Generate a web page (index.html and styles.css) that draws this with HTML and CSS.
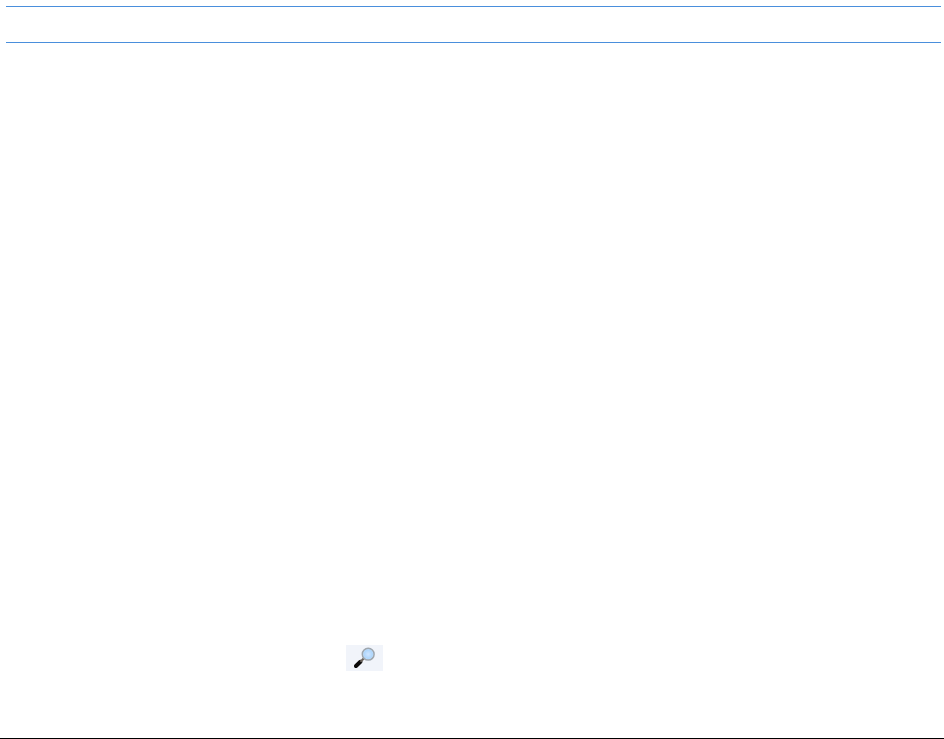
FILE: index.html
```html
<!DOCTYPE html>
<html lang="en">
<head>
<meta charset="utf-8">
<title>Search</title>
<link rel="stylesheet" href="styles.css">
</head>
<body>
<div class="page">
  <header class="header"></header>
  <main class="content">
    <button class="search" type="button" aria-label="Search">
      <svg class="search-icon" width="24" height="22" viewBox="0 0 24 22">
        <defs>
          <radialGradient id="lens" cx="0.5" cy="0.5" r="0.55">
            <stop offset="0" stop-color="#cfe5ff"/>
            <stop offset="0.65" stop-color="#aed6fc"/>
            <stop offset="1" stop-color="#e6f0fa"/>
          </radialGradient>
        </defs>
        <path d="M3 19 L7.4 14.8" stroke="#0a0908" stroke-width="4" stroke-linecap="round"/>
        <path d="M7.4 14.8 L11 11.2" stroke="#6b625a" stroke-width="2.2"/>
        <circle cx="15.2" cy="7.2" r="5.9" fill="url(#lens)" stroke="#9ea6ae" stroke-width="1.5"/>
      </svg>
    </button>
  </main>
</div>
</body>
</html>
```
FILE: styles.css
```css
html, body {
  margin: 0;
  padding: 0;
  background: #fff;
}
.page {
  box-sizing: border-box;
  height: 739px;
  display: flex;
  flex-direction: column;
  border-bottom: 1px solid #000;
  overflow: hidden;
}
.header {
  box-sizing: border-box;
  height: 37px;
  margin: 6px 3px 0 6px;
  border-top: 1px solid #4a8fdc;
  border-bottom: 1px solid #4a8fdc;
}
.content {
  flex: 1;
  padding: 602px 0 0 346px;
}
.search {
  display: flex;
  align-items: center;
  justify-content: center;
  width: 37px;
  height: 26px;
  padding: 0;
  border: 0;
  background: #f1f4fa;
}
.search-icon {
  display: block;
  filter: blur(0.5px);
}
```
